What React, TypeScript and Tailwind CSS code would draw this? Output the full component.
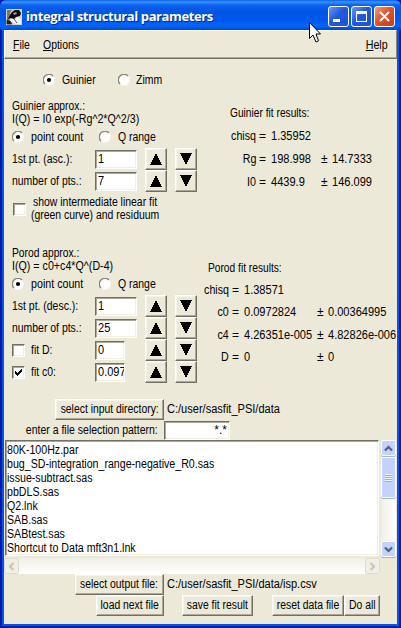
import React from "react";

const raised =
  "border border-t-white border-l-white border-r-[#716f64] border-b-[#716f64] shadow-[inset_-1px_-1px_0_#aca899,inset_1px_1px_0_#f6f4ea] bg-[#ece9d8]";
const sunken =
  "border border-t-[#716f64] border-l-[#716f64] border-r-white border-b-white shadow-[inset_1px_1px_0_#aca899,inset_-1px_-1px_0_#f1efe2] bg-white";

// Condensed label text; `s` sets the horizontal scale and its origin.
function T({ children, s = "origin-left scale-x-[0.87]" }: { children: React.ReactNode; s?: string }) {
  return <span className={`inline-block ${s}`}>{children}</span>;
}

const num = "origin-left scale-x-[0.92]";

function Radio({ on = false }: { on?: boolean }) {
  return (
    <svg className="block h-3 w-3 shrink-0" viewBox="0 0 12 12">
      <circle cx="6" cy="6" r="5.5" fill="#fff" stroke="#fff" />
      <path d="M2 10A5.5 5.5 0 0 1 10 2" fill="none" stroke="#8a877a" strokeWidth="1.4" />
      <path d="M10 2A5.5 5.5 0 0 1 2 10" fill="none" stroke="#f4f2e8" strokeWidth="1" />
      {on && <circle cx="6" cy="6" r="2.1" fill="#000" />}
    </svg>
  );
}

function Check({ on = false }: { on?: boolean }) {
  return (
    <div className={`h-[13px] w-[13px] shrink-0 ${sunken}`}>
      {on && (
        <svg className="block h-[11px] w-[11px]" viewBox="0 0 11 11" shapeRendering="crispEdges">
          <path d="M2 4v3l2 2 5-5V1L4 6z" fill="#000" />
        </svg>
      )}
    </div>
  );
}

function Arrow({ down = false }: { down?: boolean }) {
  return (
    <button className={`flex h-[22px] w-[22px] shrink-0 items-center justify-center ${raised}`}>
      <svg className="block h-3 w-3" viewBox="0 0 12 12" shapeRendering="crispEdges">
        <path d={down ? "M0 0H12L6 12z" : "M6 0L12 12H0z"} fill="#000" />
      </svg>
    </button>
  );
}

function Spin({ label, value, small = false, check }: { label: string; value: string; small?: boolean; check?: boolean }) {
  return (
    <div className="flex h-[22px] items-center">
      <div className="flex w-[83px] shrink-0 items-center">
        {check !== undefined && (
          <div className="w-[19px]">
            <Check on={check} />
          </div>
        )}
        <T>{label}</T>
      </div>
      <div className="w-[50px] shrink-0">
        <div className={`flex h-[19px] items-center overflow-hidden pl-[2px] ${small ? "w-[30px]" : "w-[42px]"} ${sunken}`}>
          <T s={num}>{value}</T>
        </div>
      </div>
      <div className="flex gap-2">
        <Arrow />
        <Arrow down />
      </div>
    </div>
  );
}

function Mode() {
  return (
    <div className="flex h-[22px] items-center">
      <Radio on />
      <div className="w-[75px] pl-[7px]"><T s="origin-left scale-x-[0.89]">point count</T></div>
      <Radio />
      <div className="pl-[7px]"><T>Q range</T></div>
    </div>
  );
}

type Row = [string, string, string?];

function Results({ rows, cls, label, value, row }: { rows: Row[]; cls: string; label: string; value: string; row: string }) {
  return (
    <div className={cls}>
      {rows.map(([n, v, e]) => (
        <div key={n} className={`flex items-center ${row}`}>
          <div className={`flex shrink-0 justify-end ${label}`}>
            <T s="origin-right scale-x-[0.89]">{n}</T>
          </div>
          <span className="w-[15px] shrink-0 pl-[3px]">=</span>
          <div className={`shrink-0 ${value}`}><T s={num}>{v}</T></div>
          {e && <span className="w-[11px] shrink-0">±</span>}
          {e && <T s={num}>{e}</T>}
        </div>
      ))}
    </div>
  );
}

function Btn({ children, cls }: { children: React.ReactNode; cls: string }) {
  return (
    <button className={`flex h-[21px] shrink-0 items-center justify-center ${cls} ${raised}`}>
      <T s="origin-center scale-x-[0.865]">{children}</T>
    </button>
  );
}

function Scroll({ d, off = false }: { d: string; off?: boolean }) {
  return (
    <div
      className={`flex h-[16px] w-[15px] shrink-0 items-center justify-center rounded-[2px] border ${
        off ? "border-[#dddccf] bg-[#f0efe6]" : "border-white bg-[#c3d3fd] shadow-[0_1px_0_#9db5e8]"
      }`}
    >
      <svg className="block h-[9px] w-[9px]" viewBox="0 0 9 9">
        <path d={d} fill="none" stroke={off ? "#c8c7b9" : "#4d6185"} strokeWidth="2.2" />
      </svg>
    </div>
  );
}

const files = [
  "80K-100Hz.par",
  "bug_SD-integration_range-negative_R0.sas",
  "issue-subtract.sas",
  "pbDLS.sas",
  "Q2.lnk",
  "SAB.sas",
  "SABtest.sas",
  "Shortcut to Data mft3n1.lnk",
];

const caption = "flex h-[21px] w-[21px] items-center justify-center rounded-[3px] border border-white";

export default function App() {
  return (
    <div className="relative flex h-[628px] w-[401px] flex-col overflow-hidden whitespace-nowrap bg-[#0855dd] font-['Liberation_Sans',sans-serif] text-[12px] leading-[13px] text-black shadow-[inset_0_0_0_2px_#0019b0]">
      <header className="flex h-[30px] shrink-0 items-center rounded-t-[6px] bg-[linear-gradient(#0a5fe0_0,#3a93ff_2px,#0a63ee_5px,#0054e3_12px,#0058ee_20px,#0066ff_26px,#0046c8_30px)] pt-[3px] pl-[6px]">
        <svg className="h-4 w-4 shrink-0" viewBox="0 0 16 16">
          <path d="M0 0h16v16H0z" fill="#d4d4d4" />
          <path d="M1 1h5L4 4l1 4-2 3-2 3z" fill="#777" />
          <path d="M6 3l3-2h4l2 3-1 3-4 1-2 2-3-1-3 1 2-4z" fill="#080808" />
          <path d="M7 4l3-1 1 2-3 1z" fill="#999" />
          <path d="M2 13l4-3 3 1 3-3 3 2v5H9l-2-2-3 2z" fill="#f6f6f6" />
          <path d="M1 11l3 1 2 3H1zM8 10l3 4" fill="#222" stroke="#222" strokeWidth=".8" />
        </svg>
        <span className="pl-1 font-['Open_Sans',sans-serif] text-[13px] font-bold tracking-[-0.4px] text-white [text-shadow:1px_1px_0_#0a2a8c]">
          integral structural parameters
        </span>
        <div className="ml-auto flex gap-[2px] pr-[6px]">
          <div className={`${caption} bg-[linear-gradient(135deg,#6a97f6,#2458dc_45%,#1f50d4)]`}>
            <div className="mt-[8px] mr-[5px] h-[3px] w-[7px] bg-white" />
          </div>
          <div className={`${caption} bg-[linear-gradient(135deg,#6a97f6,#2458dc_45%,#1f50d4)]`}>
            <div className="h-[11px] w-[11px] border border-t-[3px] border-white" />
          </div>
          <div className={`${caption} bg-[linear-gradient(135deg,#f0a084,#e0522c_45%,#cc3c14)]`}>
            <svg className="h-[11px] w-[11px]" viewBox="0 0 11 11">
              <path d="M1 1l9 9M10 1l-9 9" stroke="#fff" strokeWidth="2.1" />
            </svg>
          </div>
        </div>
      </header>

      <div className="mx-1 flex h-[594px] shrink-0 flex-col bg-[#ece9d8]">
        <nav className="flex h-[29px] shrink-0 items-center border border-t-white border-l-white border-r-[#8a877a] border-b-[#716f64] pl-2 pr-[8px] pt-px shadow-[inset_0_-1px_0_#aca899]">
          <div className="w-[30px]"><T><u>F</u>ile</T></div>
          <T><u>O</u>ptions</T>
          <div className="ml-auto"><T s="origin-right scale-x-[0.89]"><u>H</u>elp</T></div>
        </nav>

        <div className="flex h-[41px] shrink-0 items-center pl-[39px] pt-px">
          <Radio on />
          <div className="w-[63px] pl-[7px]"><T>Guinier</T></div>
          <Radio />
          <div className="pl-[6px]"><T>Zimm</T></div>
        </div>

        <section className="flex h-[147px] shrink-0 pl-2">
          <div className="w-[188px] shrink-0">
            <div><T s="origin-left scale-x-[0.855]">Guinier approx.:</T></div>
            <div><T s="origin-left scale-x-[0.89]">I(Q) = I0 exp(-Rg^2*Q^2/3)</T></div>
            <Mode />
            <Spin label="1st pt. (asc.):" value="1" />
            <Spin label="number of pts.:" value="7" />
            <div className="flex items-center pt-[4px] pl-px">
              <Check />
              <div className="pl-[5px]">
                <div className="pl-[2px]"><T>show intermediate linear fit</T></div>
                <div><T>(green curve) and residuum</T></div>
              </div>
            </div>
          </div>
          <div className="pt-[7px]">
            <div className="pl-[30px]"><T s="origin-left scale-x-[0.85]">Guinier fit results:</T></div>
            <Results
              cls="pt-[5px]"
              row="h-[23px]"
              label="w-[56px]"
              value="w-[50px]"
              rows={[["chisq", "1.35952"], ["Rg", "198.998", "14.7333"], ["I0", "4439.9", "146.099"]]}
            />
          </div>
        </section>

        <section className="flex h-[152px] shrink-0 pl-2">
          <div className="w-[188px] shrink-0">
            <div><T s="origin-left scale-x-[0.855]">Porod approx.:</T></div>
            <div><T s="origin-left scale-x-[0.89]">I(Q) = c0+c4*Q^(D-4)</T></div>
            <Mode />
            <Spin label="1st pt. (desc.):" value="1" />
            <Spin label="number of pts.:" value="25" />
            <Spin label="fit D:" value="0" small check={false} />
            <Spin label="fit c0:" value="0.0972" small check />
          </div>
          <div className="pt-[15px]">
            <div className="pl-[8px]"><T s="origin-left scale-x-[0.85]">Porod fit results:</T></div>
            <Results
              cls="pt-[4px]"
              row="h-[22.5px]"
              label="w-[29px]"
              value="w-[73px]"
              rows={[
                ["chisq", "1.38571"],
                ["c0", "0.0972824", "0.00364995"],
                ["c4", "4.26351e-005", "4.82826e-006"],
                ["D", "0", "0"],
              ]}
            />
          </div>
        </section>

        <div className="flex h-[21px] shrink-0 items-center pl-[51px]">
          <Btn cls="w-[109px]">select input directory:</Btn>
          <div className="pl-[3px]"><T s={num}>C:/user/sasfit_PSI/data</T></div>
        </div>
        <div className="flex h-5 shrink-0 items-center">
          <div className="flex w-[160px] shrink-0 justify-end pr-[6px]">
            <T s="origin-right scale-x-[0.875]">enter a file selection pattern:</T>
          </div>
          <div className={`flex h-[19px] w-[66px] items-center justify-end pr-[2px] ${sunken}`}>*.*</div>
        </div>

        <div className="flex h-[117px] shrink-0">
          <div className={`ml-px h-[116px] w-[374px] pt-[2px] pl-px leading-[14px] ${sunken}`}>
            {files.map((f) => (
              <div key={f}><T s="origin-left scale-x-[0.885]">{f}</T></div>
            ))}
          </div>
          <div className="ml-[2px] flex w-[15px] flex-col bg-[linear-gradient(90deg,#f0efe6,#fff)]">
            <Scroll d="M1 6.5L4.5 3L8 6.5" />
            <div className="mt-px flex h-[41px] flex-col items-center justify-center gap-px rounded-[2px] border border-white bg-[#c3d3fd] shadow-[0_1px_0_#9db5e8]">
              {[0, 1, 2, 3].map((i) => (
                <div key={i} className="h-px w-[7px] bg-[#eef4fe] shadow-[0_1px_0_#8cb0f8]" />
              ))}
            </div>
            <div className="mt-auto">
              <Scroll d="M1 2.5L4.5 6L8 2.5" />
            </div>
          </div>
        </div>
        <div className="mt-px flex h-4 w-[376px] shrink-0 justify-between bg-[linear-gradient(#f0efe6,#fff)]">
          <Scroll off d="M6.5 1L3 4.5L6.5 8" />
          <Scroll off d="M2.5 1L6 4.5L2.5 8" />
        </div>

        <div className="flex h-[21px] shrink-0 items-center pl-[71px]">
          <Btn cls="w-[89px]">select output file:</Btn>
          <div className="pl-[3px]"><T s={num}>C:/user/sasfit_PSI/data/isp.csv</T></div>
        </div>
        <div className="flex h-[21px] shrink-0 pl-[92px]">
          <Btn cls="w-[68px]">load next file</Btn>
          <Btn cls="ml-[18px] w-[71px]">save fit result</Btn>
          <Btn cls="ml-[19px] w-[72px]">reset data file</Btn>
          <Btn cls="w-[36px]">Do all</Btn>
        </div>
      </div>

      <svg className="absolute top-[22px] left-[309px] h-[22px] w-[13px]" viewBox="0 0 13 22">
        <path d="M.5 .5V16.500L4 13l3 7 2.500-1.200L7 12h4.500z" fill="#fff" stroke="#000" />
      </svg>
    </div>
  );
}
